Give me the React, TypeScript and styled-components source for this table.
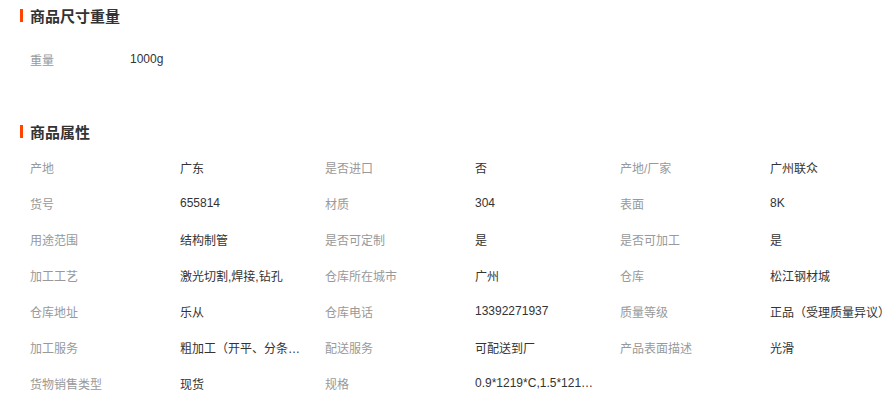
import React from "react";
import styled, { createGlobalStyle } from "styled-components";

const Global = createGlobalStyle`
  html, body { margin: 0; padding: 0; background: #fff; }
  body { font-family: "Liberation Sans", "Noto Sans CJK SC", sans-serif; font-size: 12px; color: #333; }
`;

const Page = styled.div`
  width: 894px;
  height: 398px;
  overflow: hidden;
  padding-left: 20px;
  box-sizing: border-box;
`;

const Section = styled.section<{ $gapTop?: number }>`
  margin-top: ${(p) => p.$gapTop ?? 0}px;
`;

const Title = styled.h3`
  margin: 0;
  height: 30px;
  display: flex;
  align-items: center;
  gap: 7px;
  font-size: 15px;
  font-weight: bold;
  color: #333;
  font-family: "Noto Sans CJK SC", sans-serif;
  &::before {
    content: "";
    display: block;
    width: 3px;
    height: 13px;
    background: #ff4400;
  }
`;

const WeightRow = styled.div`
  margin-top: 11px;
  height: 36px;
  display: grid;
  grid-template-columns: 100px auto;
  align-items: center;
  padding-left: 10px;
`;

const Table = styled.div`
  margin-top: 3px;
  padding-left: 10px;
  display: grid;
  grid-template-columns: 150px 145px 150px 145px 150px 1fr;
  grid-auto-rows: 36px;
  align-items: center;
`;

const Label = styled.span`
  color: #999;
  white-space: nowrap;
`;

const Value = styled.span`
  color: #333;
  white-space: nowrap;
  overflow: hidden;
  text-overflow: ellipsis;
  max-width: 123px;
`;

const WideValue = styled(Value)`
  max-width: none;
`;

const rows: [string, string][][] = [
  [["产地", "广东"], ["是否进口", "否"], ["产地/厂家", "广州联众"]],
  [["货号", "655814"], ["材质", "304"], ["表面", "8K"]],
  [["用途范围", "结构制管"], ["是否可定制", "是"], ["是否可加工", "是"]],
  [["加工工艺", "激光切割,焊接,钻孔"], ["仓库所在城市", "广州"], ["仓库", "松江钢材城"]],
  [["仓库地址", "乐从"], ["仓库电话", "13392271937"], ["质量等级", "正品（受理质量异议）"]],
  [["加工服务", "粗加工（开平、分条、切割）"], ["配送服务", "可配送到厂"], ["产品表面描述", "光滑"]],
  [["货物销售类型", "现货"], ["规格", "0.9*1219*C,1.5*1219*C,2.0*1219*C"]],
];

export default function App() {
  return (
    <Page>
      <Global />
      <Section>
        <Title>商品尺寸重量</Title>
        <WeightRow>
          <Label>重量</Label>
          <WideValue>1000g</WideValue>
        </WeightRow>
      </Section>
      <Section $gapTop={39}>
        <Title>商品属性</Title>
        <Table>
          {rows.map((row, i) =>
            row.map(([k, v], j) => (
              <React.Fragment key={`${i}-${j}`}>
                <Label>{k}</Label>
                {j === 2 ? <WideValue>{v}</WideValue> : <Value>{v}</Value>}
              </React.Fragment>
            ))
          )}
        </Table>
      </Section>
    </Page>
  );
}
